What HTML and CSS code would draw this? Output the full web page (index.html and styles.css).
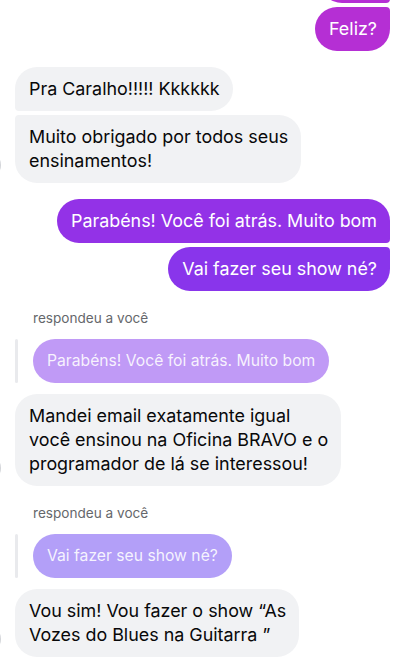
FILE: index.html
```html
<!DOCTYPE html>
<html lang="pt-BR">
<head>
<meta charset="utf-8">
<title>Conversa</title>
<link rel="stylesheet" href="styles.css">
</head>
<body>
<main class="thread">
  <section class="group sent-group">
    <div class="bubble sent magenta first hidden-top"></div>
    <div class="bubble sent magenta last">Feliz?</div>
  </section>

  <section class="group received-group">
    <div class="avatar"></div>
    <div class="stack">
      <div class="bubble received first">Pra Caralho!!!!! Kkkkkk</div>
      <div class="bubble received last">Muito obrigado por todos seus<br>ensinamentos!</div>
    </div>
  </section>

  <section class="group sent-group">
    <div class="bubble sent violet first">Parabéns! Você foi atrás. Muito bom</div>
    <div class="bubble sent violet2 last">Vai fazer seu show né?</div>
  </section>

  <section class="group received-group reply-group">
    <div class="avatar"></div>
    <div class="stack">
      <div class="reply-label">respondeu a você</div>
      <div class="quote">
        <span class="quote-bar"></span>
        <div class="bubble quoted q1">Parabéns! Você foi atrás. Muito bom</div>
      </div>
      <div class="bubble received single">Mandei email exatamente igual<br>você ensinou na Oficina BRAVO e o<br>programador de lá se interessou!</div>
    </div>
  </section>

  <section class="group received-group reply-group">
    <div class="avatar"></div>
    <div class="stack">
      <div class="reply-label">respondeu a você</div>
      <div class="quote">
        <span class="quote-bar"></span>
        <div class="bubble quoted q2">Vai fazer seu show né?</div>
      </div>
      <div class="bubble received single">Vou sim! Vou fazer o show “As<br>Vozes do Blues na Guitarra ”</div>
    </div>
  </section>
</main>
</body>
</html>
```

FILE: styles.css
```css
* { box-sizing: border-box; }

html, body {
  margin: 0;
  padding: 0;
  background: #ffffff;
}

body {
  font-family: Inter, "Noto Sans", "Liberation Sans", sans-serif;
  width: 400px;
  height: 664px;
  overflow: hidden;
}

.thread {
  display: flex;
  flex-direction: column;
  padding: 0 10px 0 15px;
  margin-top: -41px;
}

.group {
  display: flex;
  margin-top: 16px;
}

.group:first-child { margin-top: 0; }

.sent-group {
  flex-direction: column;
  align-items: flex-end;
  gap: 4px;
}

.received-group {
  flex-direction: row;
  align-items: flex-end;
}

.stack {
  display: flex;
  flex-direction: column;
  align-items: flex-start;
  gap: 4px;
}

.avatar {
  flex: none;
  width: 28px;
  height: 28px;
  border-radius: 50%;
  background: #d3d5d9;
  margin-left: -42px;
  margin-right: 14px;
  margin-bottom: 4px;
}

.bubble {
  font-size: 17.9px;
  line-height: 24px;
  padding: 10px 13px 10px 14px;
  border-radius: 22px;
}

.received {
  background: #f1f2f4;
  color: #080809;
}

.received.first { border-bottom-left-radius: 4px; }
.received.last { border-top-left-radius: 4px; }

.sent { color: #ffffff; }
.sent.first { border-bottom-right-radius: 4px; }
.sent.last { border-top-right-radius: 4px; }

.magenta { background: #b52fd4; }
.violet { background: #9332e7; }
.violet2 { background: #8935eb; }

.hidden-top {
  width: 70px;
  height: 44px;
}

.reply-group { margin-top: 18px; }
.reply-group .stack { gap: 0; }

.reply-label {
  font-size: 13.6px;
  line-height: 18px;
  color: #65676b;
  padding-left: 18px;
  margin-bottom: 12px;
}

.quote {
  display: flex;
  align-items: stretch;
  margin-bottom: 11px;
}

.quote-bar {
  width: 3px;
  border-radius: 2px;
  background: #e9eaed;
  margin-right: 15px;
}

.quoted {
  font-size: 15.7px;
  padding-right: 14px;
  color: rgba(255, 255, 255, 0.88);
}

.q1 { background: #c09af6; }
.q2 { background: #b39ff8; }
```
